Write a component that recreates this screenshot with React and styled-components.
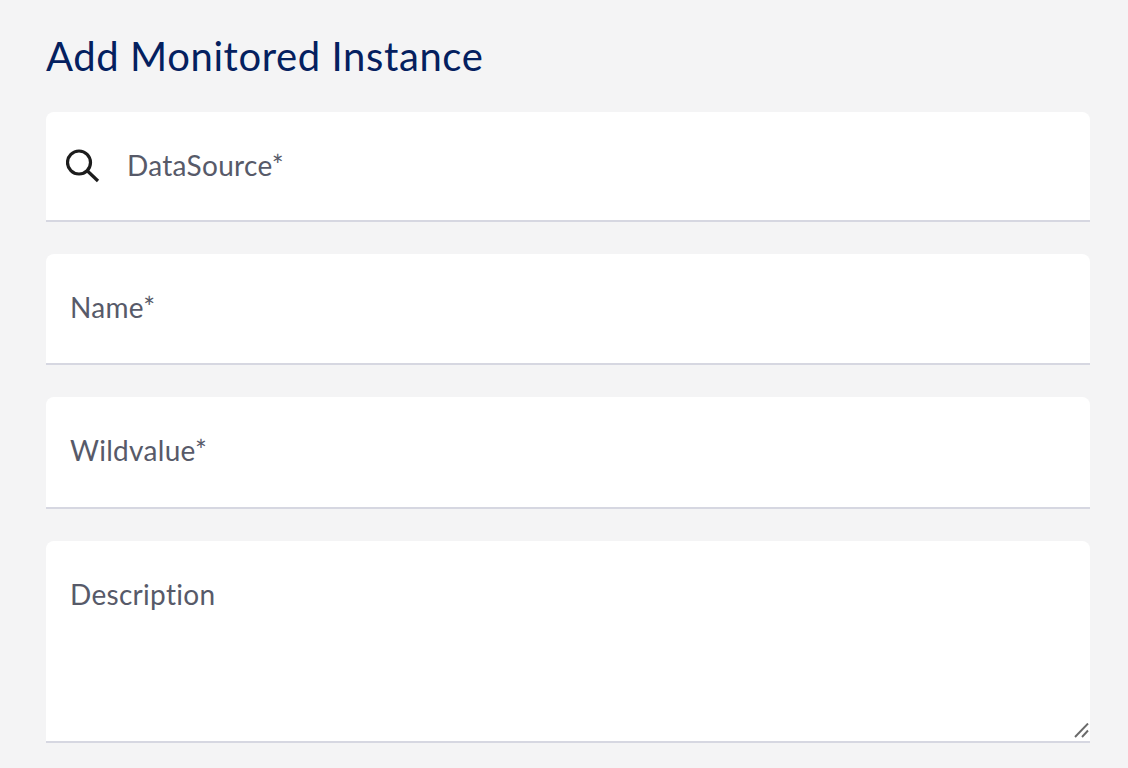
import React from "react";
import styled, { createGlobalStyle } from "styled-components";

const GlobalStyle = createGlobalStyle`
  html, body {
    margin: 0;
    padding: 0;
    background: #f4f4f5;
    font-family: "Lato", "Liberation Sans", sans-serif;
  }
`;

const Page = styled.div`
  height: 768px;
  overflow: hidden;
  box-sizing: border-box;
  padding: 32px 38px 0 46px;
  display: flex;
  flex-direction: column;
`;

const Title = styled.h1`
  margin: 0 0 32px;
  height: 48px;
  line-height: 48px;
  font-size: 40px;
  font-weight: 400;
  letter-spacing: 0.6px;
  color: #04205f;
`;

const Fields = styled.div`
  display: flex;
  flex-direction: column;
  gap: 32px;
`;

const Field = styled.div`
  position: relative;
  box-sizing: border-box;
  height: ${(props) => props.$height}px;
  padding: ${(props) => (props.$icon ? "33px 20px 0" : "33px 25px 0")};
  display: flex;
  align-items: flex-start;
  gap: 28px;
  background: #fff;
  border-radius: 8px 8px 0 0;
  border-bottom: 2px solid #d6d7e1;
`;

const Label = styled.span`
  font-size: 28px;
  line-height: 40px;
  letter-spacing: 0.3px;
  margin-left: -1px;
  color: #575a69;
`;

const SearchIcon = styled.svg`
  width: 34px;
  height: 34px;
  margin-top: 4px;
  flex-shrink: 0;
`;

const ResizeHandle = styled.svg`
  position: absolute;
  right: 0;
  bottom: 2px;
  width: 16px;
  height: 16px;
`;

const App = () => {
  return (
    <Page>
      <GlobalStyle />
      <Title>Add Monitored Instance</Title>
      <Fields>
        <Field $height={110} $icon>
          <SearchIcon viewBox="0 0 34 34" fill="none" stroke="#1c1c1c">
            <circle cx="13" cy="13.5" r="11.5" strokeWidth="3.2" />
            <path d="M21.5 22 L32 32" strokeWidth="3.2" />
          </SearchIcon>
          <Label>DataSource*</Label>
        </Field>
        <Field $height={111}>
          <Label>Name*</Label>
        </Field>
        <Field $height={112}>
          <Label>Wildvalue*</Label>
        </Field>
        <Field $height={202}>
          <Label>Description</Label>
          <ResizeHandle viewBox="0 0 16 16" fill="none" stroke="#6a6a6a" strokeWidth="1.9">
            <path d="M1 14 L14 0.5" />
            <path d="M8 14 L14 7.5" />
          </ResizeHandle>
        </Field>
      </Fields>
    </Page>
  );
};

export default App;
